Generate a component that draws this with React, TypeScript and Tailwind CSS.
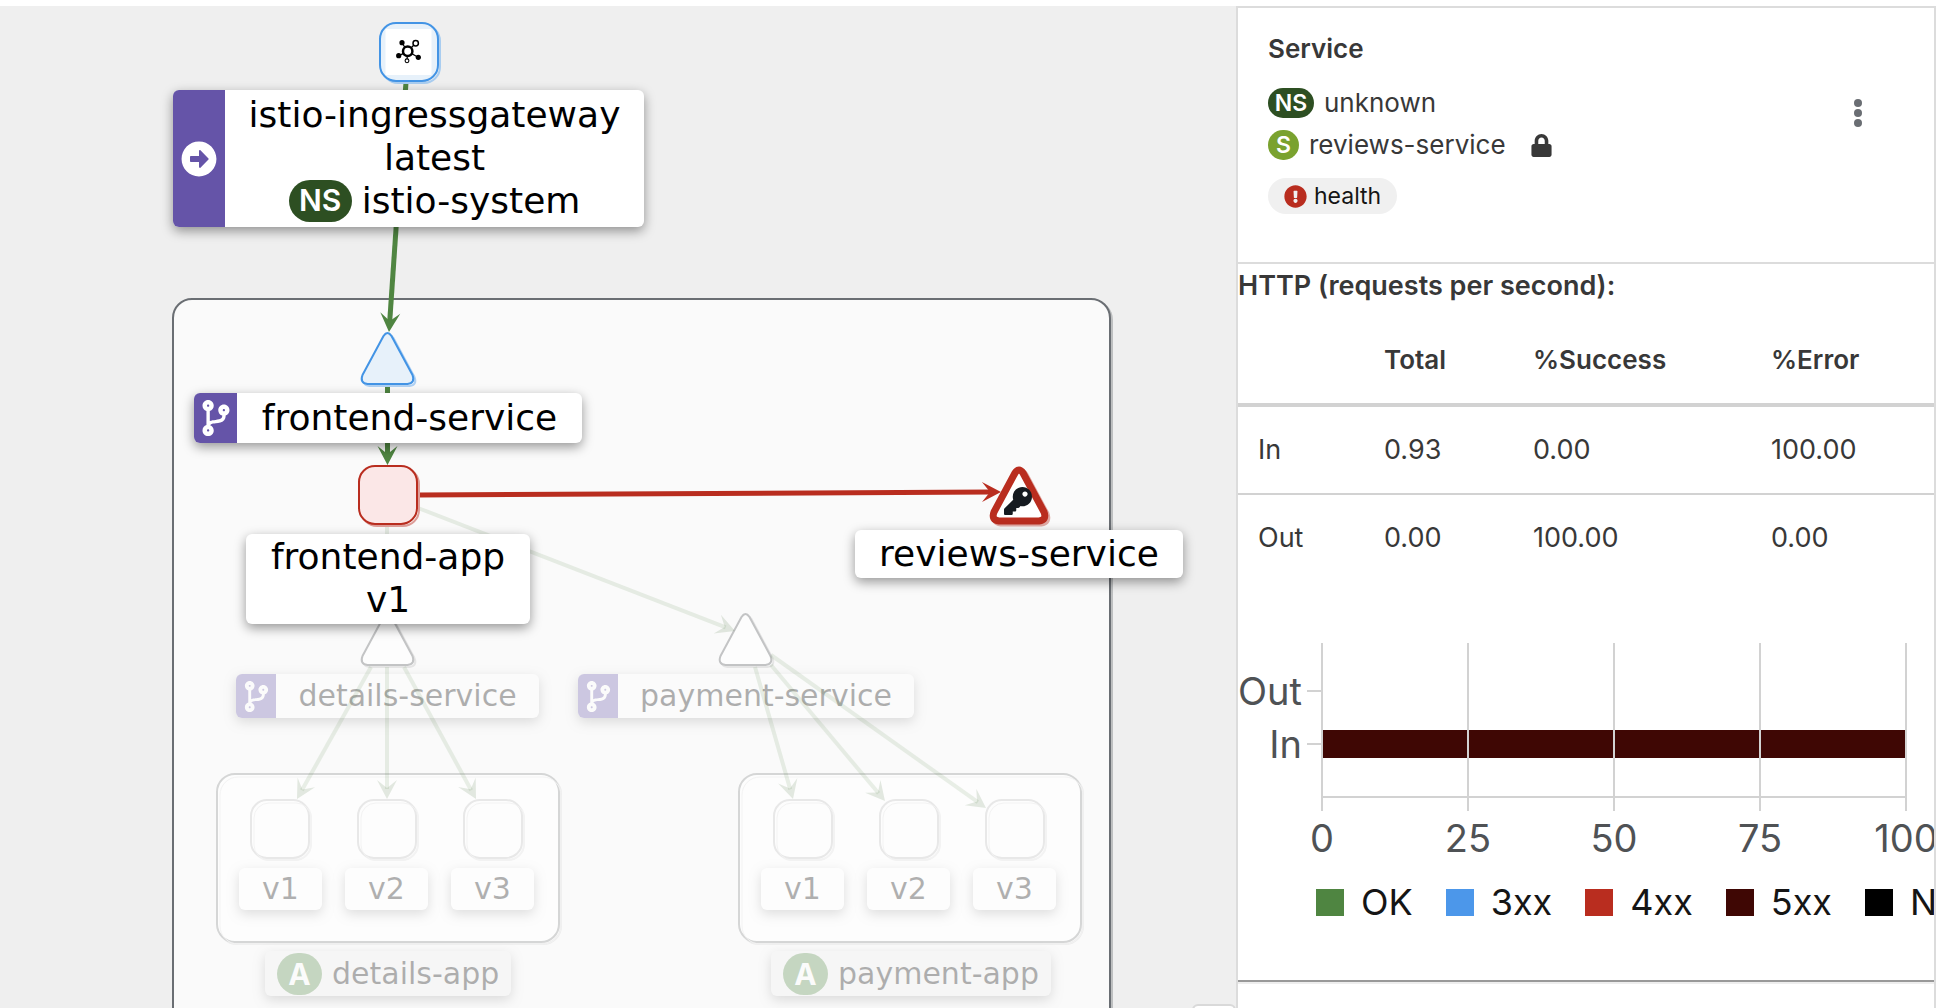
import React from "react";
import { FaArrowAltCircleRight, FaCodeBranch, FaExclamationCircle, FaKey, FaLock } from "react-icons/fa";

type Point = [number, number];

const GREEN = "#4f8541";
const RED = "#b92d1f";
const BLUE = "#4394e5";

/* ---------- graph shapes ---------- */

function Edge({ from, to, color, faint = false }: { from: Point; to: Point; color: string; faint?: boolean }) {
  const dx = to[0] - from[0];
  const dy = to[1] - from[1];
  const len = Math.hypot(dx, dy);
  const ux = dx / len;
  const uy = dy / len;
  const at = (back: number, side: number) => `${to[0] - ux * back - uy * side},${to[1] - uy * back + ux * side}`;
  return (
    <g>
      <line
        x1={from[0]}
        y1={from[1]}
        x2={to[0] - ux * 10}
        y2={to[1] - uy * 10}
        stroke={color}
        strokeWidth={faint ? 4 : 5}
        strokeOpacity={faint ? 0.12 : 1}
      />
      <polygon points={`${at(0, 0)} ${at(19, -10)} ${at(11, 0)} ${at(19, 10)}`} fill={faint ? "#3f6a34" : color} fillOpacity={faint ? 0.14 : 1} />
    </g>
  );
}

function BoxNode({ x, y, stroke, fill, shadow, innerShadow = false }: { x: number; y: number; stroke: string; fill: string; shadow: string; innerShadow?: boolean }) {
  return (
    <g strokeWidth={2}>
      <rect x={x + 3} y={y + 3} width={58} height={58} rx={16} fill="none" stroke={shadow} />
      <rect x={x + 1} y={y + 1} width={58} height={58} rx={16} fill={fill} stroke={stroke} />
      {innerShadow && <rect x={x + 4} y={y + 4} width={57} height={57} rx={15} fill="none" stroke={shadow} strokeWidth={1} />}
    </g>
  );
}

function TriangleNode({ cx, top, stroke, fill, shadow, width = 2 }: { cx: number; top: number; stroke: string; fill: string; shadow: string; width?: number }) {
  const d = `M${cx - 4} ${top + 4} Q${cx} ${top - 2} ${cx + 4} ${top + 4} L${cx + 25} ${top + 43} Q${cx + 28} ${top + 51} ${cx + 20} ${top + 52} L${cx - 20} ${top + 52} Q${cx - 28} ${top + 51} ${cx - 25} ${top + 43} Z`;
  return (
    <g strokeWidth={width} strokeLinejoin="round">
      <path d={d} transform="translate(2 2)" fill="none" stroke={shadow} />
      <path d={d} fill={fill} stroke={stroke} />
    </g>
  );
}

function Hub() {
  return (
    <g stroke="#000" fill="#000">
      <path d="M407.700 51.300L402 43M407.700 51.300L415.700 43.300M407.700 51.300L399 55.700M407.700 51.300L418 57.300M407.700 51.300L407 60" strokeWidth={1.3} />
      <circle cx={407.7} cy={51.3} r={4.7} fill="#fff" strokeWidth={2.5} />
      <circle cx={415.7} cy={43.3} r={2.7} fill="#fff" strokeWidth={1.5} />
      <circle cx={407} cy={60.8} r={1.9} fill="#fff" strokeWidth={1.1} />
      <g stroke="none">
        <circle cx={402} cy={42.7} r={2.6} />
        <circle cx={398.7} cy={55.7} r={2.6} />
        <circle cx={418.3} cy={57.3} r={2.6} />
      </g>
    </g>
  );
}

/* ---------- graph labels ---------- */

const labelShadow = "shadow-[0_4px_12px_rgba(0,0,0,0.4)]";

function Label({ place, icon, iconWidth = "", children }: { place: string; icon?: React.ReactNode; iconWidth?: string; children: React.ReactNode }) {
  return (
    <div className={`absolute flex overflow-hidden rounded-[6px] bg-white text-[36px] leading-[43px] text-black ${labelShadow} ${place}`}>
      {icon && <div className={`flex shrink-0 items-center justify-center bg-[#6554a8] text-white ${iconWidth}`}>{icon}</div>}
      <div className="flex flex-1 flex-col items-center justify-center pb-0.5 whitespace-nowrap">{children}</div>
    </div>
  );
}

function FaintLabel({ place, children, icon = false }: { place: string; children: React.ReactNode; icon?: boolean }) {
  return (
    <div className={`absolute flex overflow-hidden rounded-[6px] bg-white text-[30px] leading-10 text-black opacity-30 ${labelShadow} ${place}`}>
      {icon && (
        <div className="flex w-10 shrink-0 items-center justify-center bg-[#6554a8] text-white">
          <FaCodeBranch size={31} />
        </div>
      )}
      <div className="flex flex-1 items-center justify-center whitespace-nowrap">{children}</div>
    </div>
  );
}

function AppLabel({ place, name }: { place: string; name: string }) {
  return (
    <div className={`absolute flex h-[45px] items-center gap-[10px] rounded-[6px] bg-[#f0f0f0] px-3 text-[30px] leading-10 text-black opacity-30 ${labelShadow} ${place}`}>
      <span className="flex h-[42px] w-[45px] items-center justify-center rounded-full bg-[#4f8541] font-['Inter',sans-serif] text-[30px] font-bold text-white">A</span>
      <span className="whitespace-nowrap">{name}</span>
    </div>
  );
}

const faintEdges: [Point, Point][] = [
  [[387, 525], [387, 612]],
  [[418, 508], [735, 631]],
  [[371, 667], [297, 799]],
  [[387, 667], [387, 799]],
  [[404, 667], [476, 799]],
  [[755, 667], [793, 799]],
  [[771, 665], [885, 801]],
  [[771, 655], [986, 808]],
];

function Graph() {
  return (
    <main className="relative min-w-0 flex-1 overflow-hidden bg-[#efefef] font-['DejaVu_Sans',sans-serif]">
      <div className="absolute inset-x-0 -top-1.5 bottom-0">
        <div className="absolute top-[298px] -bottom-10 left-[172px] w-[939px] rounded-[20px] border-2 border-[#6a6e73] bg-[#fafafa] shadow-[2px_2px_0_#bdbfc0]" />

        <svg className="absolute inset-0 h-full w-full" aria-hidden="true">
          {[216, 738].map((x) => (
            <g key={x} strokeWidth={2}>
              <rect x={x + 3} y={776} width={342} height={168} rx={18} fill="none" stroke="#ededed" />
              <rect x={x + 1} y={774} width={342} height={168} rx={18} fill="#fdfdfd" stroke="#d5d6d6" />
              <rect x={x + 4} y={777} width={341} height={167} rx={18} fill="none" stroke="#f3f3f3" strokeWidth={1} />
            </g>
          ))}
          {[250, 357, 463, 773, 879, 985].map((x) => (
            <BoxNode key={x} x={x} y={799} stroke="#e8e8e8" fill="#fdfdfd" shadow="#f3f3f3" innerShadow />
          ))}
          <TriangleNode cx={387.5} top={613} stroke="#c3c4c5" fill="#fdfdfd" shadow="#e6e6e6" />
          <TriangleNode cx={745.5} top={613} stroke="#c3c4c5" fill="#fdfdfd" shadow="#e6e6e6" />
        </svg>

        <FaintLabel place="left-[236px] top-[674px] h-11 w-[303px]" icon>details-service</FaintLabel>
        <FaintLabel place="left-[578px] top-[674px] h-11 w-[336px]" icon>payment-service</FaintLabel>
        <FaintLabel place="left-[239px] top-[868px] h-[42px] w-[83px]">v1</FaintLabel>
        <FaintLabel place="left-[345px] top-[868px] h-[42px] w-[83px]">v2</FaintLabel>
        <FaintLabel place="left-[451px] top-[868px] h-[42px] w-[83px]">v3</FaintLabel>
        <FaintLabel place="left-[761px] top-[868px] h-[42px] w-[83px]">v1</FaintLabel>
        <FaintLabel place="left-[867px] top-[868px] h-[42px] w-[83px]">v2</FaintLabel>
        <FaintLabel place="left-[973px] top-[868px] h-[42px] w-[83px]">v3</FaintLabel>
        <AppLabel place="left-[265px] top-[951px]" name="details-app" />
        <AppLabel place="left-[771px] top-[951px]" name="payment-app" />

        <svg className="absolute inset-0 h-full w-full" aria-hidden="true">
          {faintEdges.map(([from, to]) => (
            <Edge key={from.join() + to.join()} from={from} to={to} color={GREEN} faint />
          ))}
          <Edge from={[406, 82]} to={[389, 332]} color={GREEN} />
          <Edge from={[387.5, 384]} to={[387.5, 465]} color={GREEN} />
          <Edge from={[418, 495]} to={[1001, 492]} color={RED} />
          <BoxNode x={379} y={22} stroke={BLUE} fill="#e7f1fa" shadow="#a9cdf0" />
          <rect x={385.5} y={29} width={46} height={46} fill="#fff" />
          <Hub />
          <TriangleNode cx={387.5} top={332} stroke={BLUE} fill="#e7f1fa" shadow="#b0d1f3" />
          <BoxNode x={358} y={465} stroke={RED} fill="#fbe7e7" shadow="#dd9d98" />
          <TriangleNode cx={1019} top={469} stroke={RED} fill="#fff" shadow="#e0a9a4" width={7} />
          <FaKey x={1004} y={487} size={28} color="#151a20" />
        </svg>

        <Label place="left-[173px] top-[90px] h-[137px] w-[471px]" icon={<FaArrowAltCircleRight size={36} />} iconWidth="w-[52px]">
          <span>istio-ingressgateway</span>
          <span>latest</span>
          <span className="flex items-center gap-[10px]">
            <span className="flex h-[42px] w-[63px] items-center justify-center rounded-full bg-[#2d4f22] font-['Inter',sans-serif] text-[30px] font-semibold text-white">NS</span>
            istio-system
          </span>
        </Label>
        <Label place="left-[194px] top-[393px] h-[50px] w-[388px]" icon={<FaCodeBranch size={36} />} iconWidth="w-[43px]">
          <span>frontend-service</span>
        </Label>
        <Label place="left-[246px] top-[534px] h-[90px] w-[284px]">
          <span>frontend-app</span>
          <span>v1</span>
        </Label>
        <Label place="left-[855px] top-[530px] h-12 w-[328px]">
          <span>reviews-service</span>
        </Label>

        <div className="absolute right-0 -bottom-10 h-11 w-11 rounded-[6px] border-2 border-[#d9d9d9] bg-white" />
      </div>
    </main>
  );
}

/* ---------- side panel ---------- */

const legend = [
  { name: "OK", swatch: "bg-[#4f8541]" },
  { name: "3xx", swatch: "bg-[#4c97ea]" },
  { name: "4xx", swatch: "bg-[#b92d1f]" },
  { name: "5xx", swatch: "bg-[#3f0704]" },
  { name: "NR", swatch: "bg-black" },
];

const ticks = [0, 25, 50, 75, 100];
const tickX = (v: number) => 84 + v * 5.84;

function RateChart() {
  return (
    <svg className="h-[290px] w-full shrink-0 overflow-hidden font-['Inter',sans-serif]" role="img" aria-label="Traffic by response code">
      <rect x={84} y={149} width={584} height={28} fill="#3f0704" />
      <g stroke="#d2d2d2" strokeWidth={2}>
        {ticks.map((v) => (
          <line key={v} x1={tickX(v)} x2={tickX(v)} y1={62} y2={230} />
        ))}
        <line x1={83} x2={669} y1={216} y2={216} />
        <line x1={69} x2={84} y1={110} y2={110} />
        <line x1={69} x2={84} y1={163} y2={163} />
      </g>
      <g fill="#4f5255" fontSize={38}>
        <text x={64} y={124} textAnchor="end">Out</text>
        <text x={64} y={177} textAnchor="end">In</text>
        {ticks.map((v) => (
          <text key={v} x={tickX(v)} y={271} textAnchor="middle">{v}</text>
        ))}
      </g>
    </svg>
  );
}

function SidePanel() {
  return (
    <aside className="mr-6 flex w-[700px] shrink-0 flex-col overflow-hidden border-x-2 border-t-2 border-[#dcdcdc] bg-white font-['Inter',sans-serif] text-[26px] leading-8 text-[#383838]">
      <header className="flex shrink-0 justify-between border-b-2 border-[#dcdcdc] pt-[25px] pr-16 pb-12 pl-[30px]">
        <div className="flex flex-col items-start">
          <h2 className="mb-[23px] font-semibold">Service</h2>
          <div className="flex h-[30px] items-center gap-[10px]">
            <span className="flex h-[30px] w-[46px] items-center justify-center rounded-full bg-[#2d4f22] text-[23px] font-semibold text-white">NS</span>
            <span>unknown</span>
          </div>
          <div className="mt-3 flex h-[30px] items-center">
            <span className="flex h-[30px] w-[31px] items-center justify-center rounded-full bg-[#7aa22f] text-[23px] font-semibold text-white">S</span>
            <span className="ml-[10px]">reviews-service</span>
            <FaLock size={23} className="ml-6" />
          </div>
          <span className="mt-[18px] flex h-9 items-center gap-[7px] rounded-full bg-[#f0f0f0] px-4 text-[23px] text-[#151515]">
            <FaExclamationCircle size={23} className="text-[#b92d1f]" />
            health
          </span>
        </div>
        <button type="button" aria-label="Actions" className="mt-[66px] h-9 w-6 text-[#6a6e73]">
          <svg viewBox="0 0 24 36" className="h-9 w-6" fill="currentColor" aria-hidden="true">
            <circle cx={12} cy={4} r={4} />
            <circle cx={12} cy={14} r={4} />
            <circle cx={12} cy={24} r={4} />
          </svg>
        </button>
      </header>

      <h3 className="h-[52px] shrink-0 pt-[6px] text-[27px] font-semibold">HTTP (requests per second):</h3>

      <table className="w-full shrink-0 table-fixed border-separate border-spacing-0 text-left">
        <colgroup>
          <col className="w-[126px]" />
          <col className="w-[149px]" />
          <col className="w-[238px]" />
          <col />
        </colgroup>
        <thead>
          <tr>
            {["", "Total", "%Success", "%Error"].map((h) => (
              <th key={h} scope="col" className="h-[91px] border-b-4 border-[#d2d2d2] p-0 pl-5 font-semibold">{h}</th>
            ))}
          </tr>
        </thead>
        <tbody className="text-[27px]">
          <tr>
            {["In", "0.93", "0.00", "100.00"].map((c, i) => (
              <td key={i} className="h-[88px] border-b-2 border-[#d2d2d2] p-0 pl-5">{c}</td>
            ))}
          </tr>
          <tr>
            {["Out", "0.00", "100.00", "0.00"].map((c, i) => (
              <td key={i} className="h-[86px] p-0 pl-5">{c}</td>
            ))}
          </tr>
        </tbody>
      </table>

      <RateChart />

      <ul className="flex h-[62px] shrink-0 items-center gap-[33px] pl-[78px] text-[36px] leading-10 text-[#151515]">
        {legend.map((item) => (
          <li key={item.name} className="flex shrink-0 items-center gap-[17px]">
            <span className={`h-[27px] w-7 ${item.swatch}`} />
            {item.name}
          </li>
        ))}
      </ul>

      <hr className="mt-[47px] h-1 shrink-0 border-t-2 border-b-2 border-t-[#999999] border-b-[#eeeeee]" />
    </aside>
  );
}

export default function App() {
  return (
    <div className="flex h-screen overflow-hidden bg-white pt-1.5">
      <Graph />
      <SidePanel />
    </div>
  );
}
